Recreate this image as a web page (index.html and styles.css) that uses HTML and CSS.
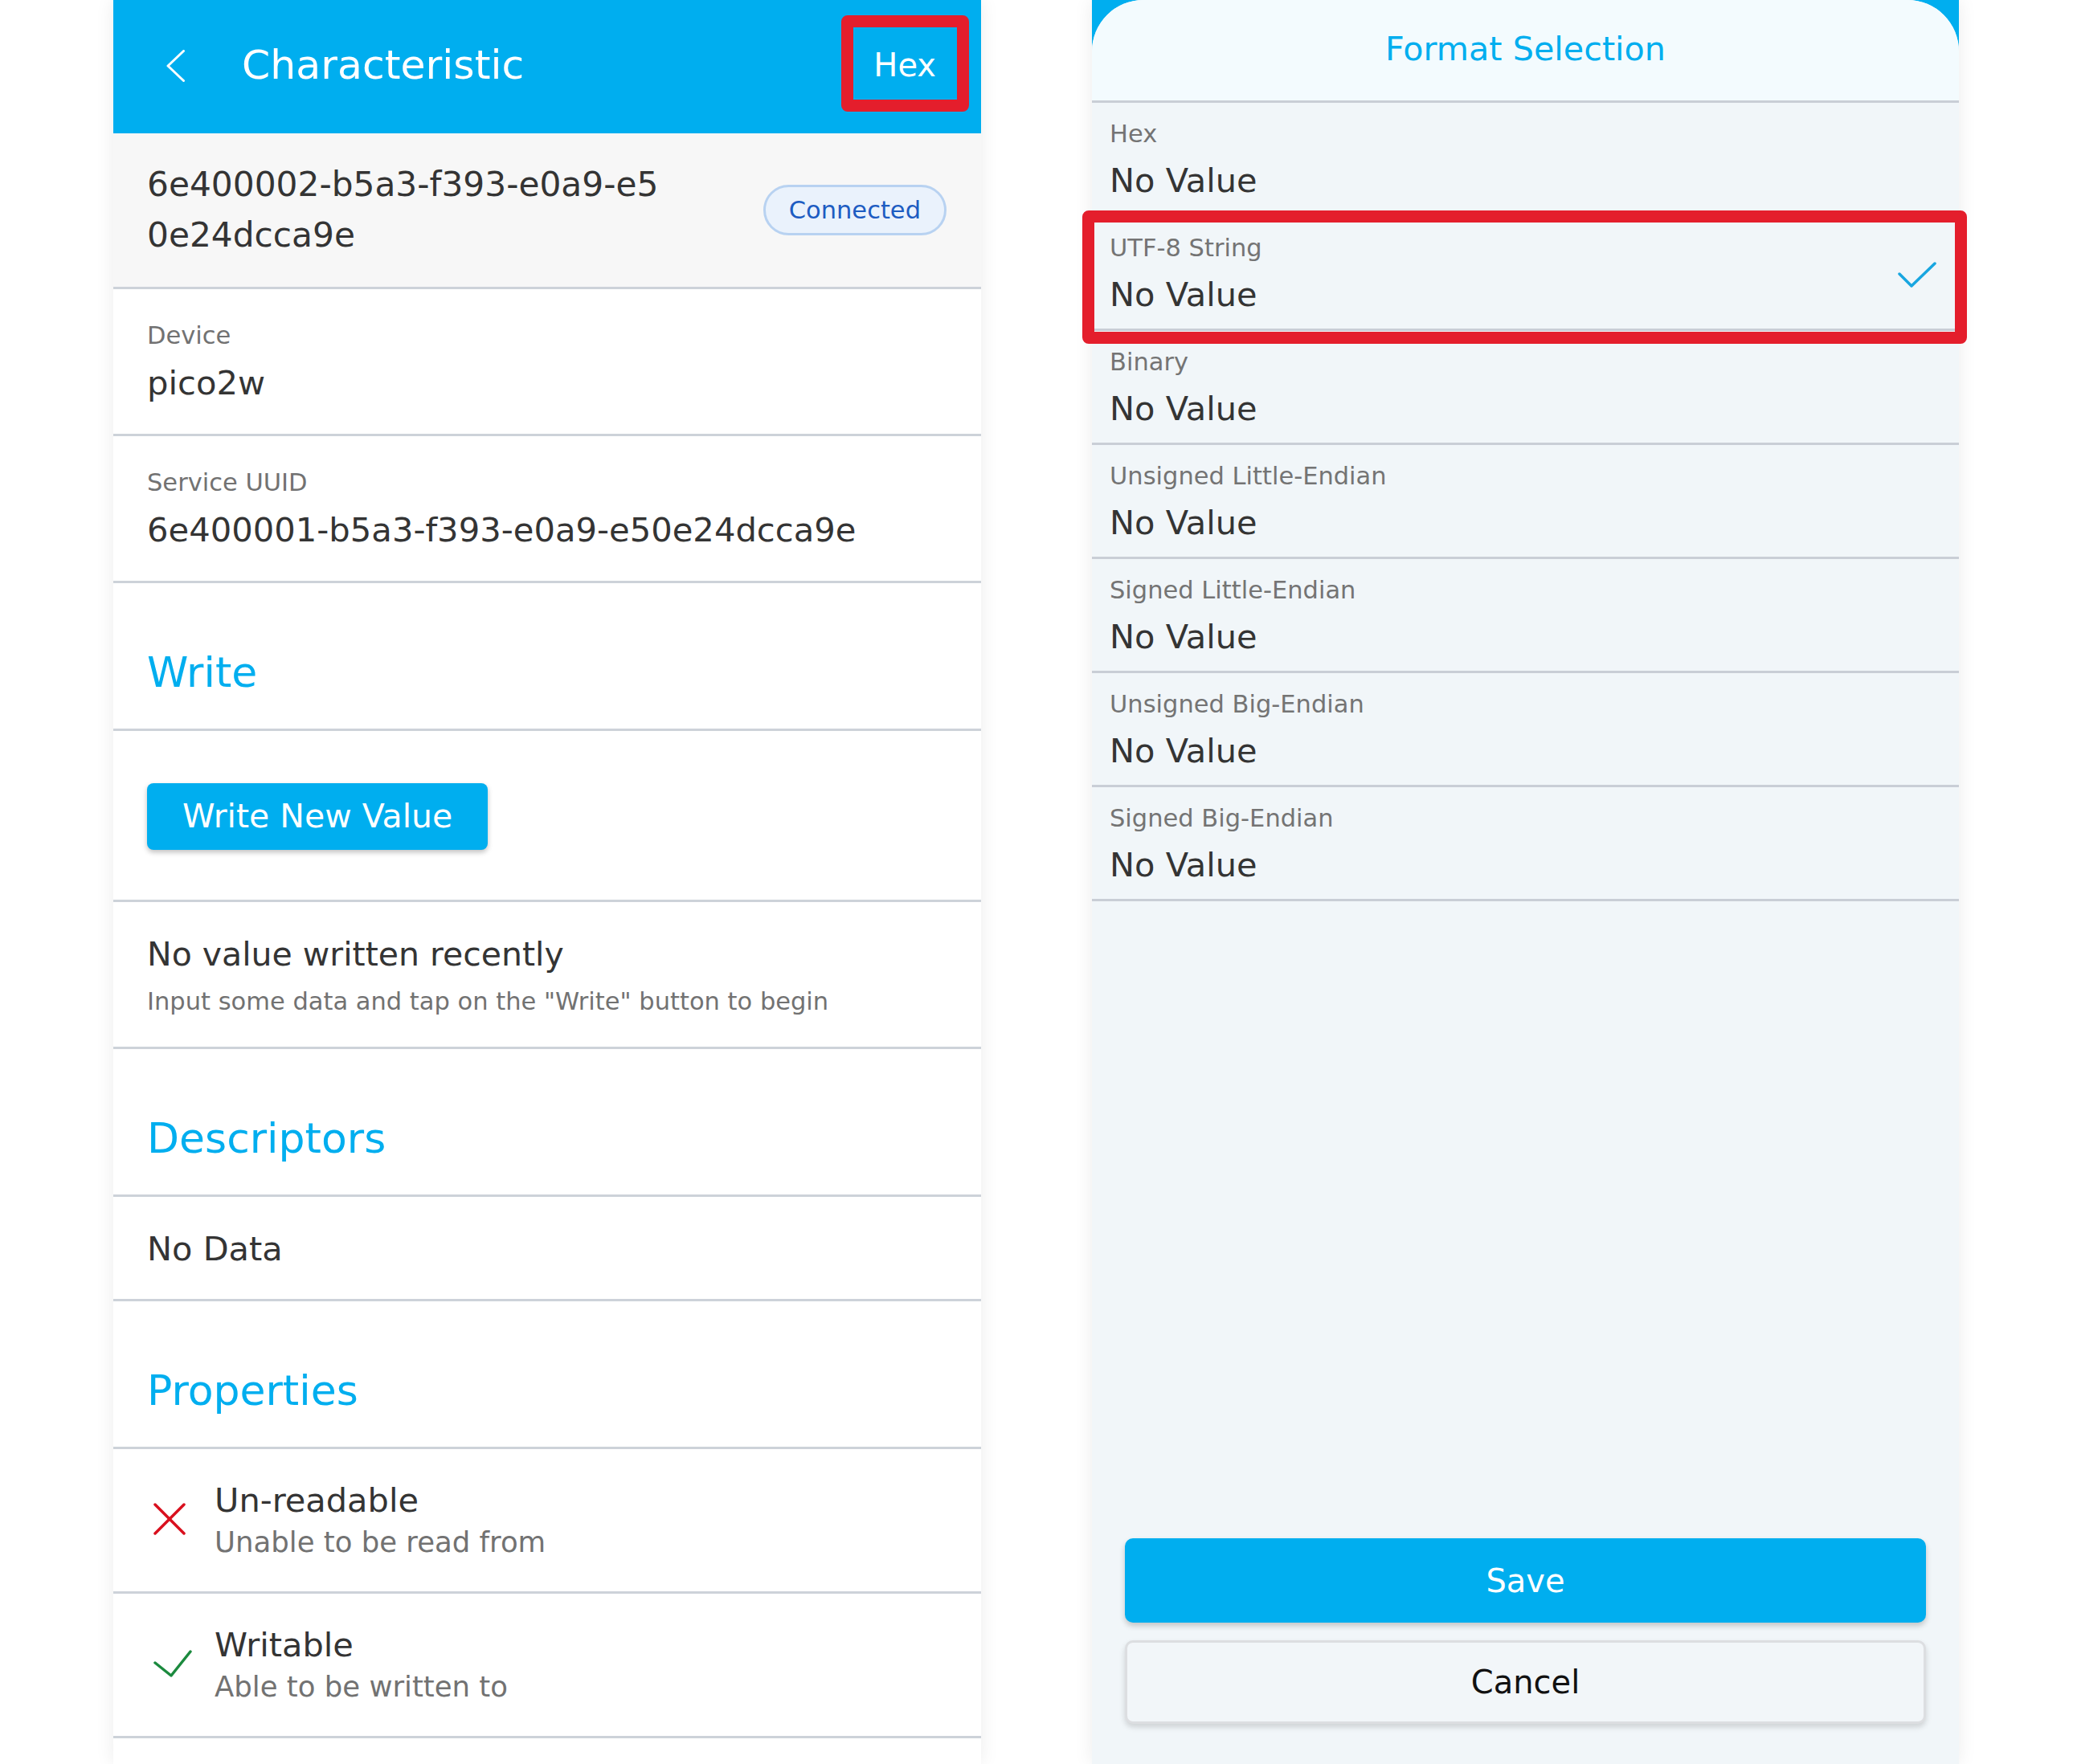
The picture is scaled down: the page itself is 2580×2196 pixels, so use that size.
FILE: index.html
```html
<!DOCTYPE html>
<html lang="en">
<head>
<meta charset="utf-8">
<title>Characteristic / Format Selection</title>
<link rel="stylesheet" href="styles.css">
</head>
<body>
<div class="stage">
  <section class="screen screen-left">
    <header class="appbar">
      <svg class="back-icon" width="24" height="40" viewBox="0 0 24 40" aria-hidden="true">
        <polyline points="21.5,1.5 2,20 21.5,38.5" fill="none" stroke="#fff" stroke-width="3" stroke-linecap="round" stroke-linejoin="round"/>
      </svg>
      <h1 class="appbar-title">Characteristic</h1>
      <span class="appbar-action">Hex</span>
    </header>

    <div class="row row-uuid">
      <div class="uuid">6e400002-b5a3-f393-e0a9-e50e24dcca9e</div>
      <span class="badge">Connected</span>
    </div>

    <div class="row field">
      <div class="field-label">Device</div>
      <div class="field-value">pico2w</div>
    </div>

    <div class="row field">
      <div class="field-label">Service UUID</div>
      <div class="field-value">6e400001-b5a3-f393-e0a9-e50e24dcca9e</div>
    </div>

    <div class="row section-title">Write</div>

    <div class="row row-button">
      <button class="btn-write">Write New Value</button>
    </div>

    <div class="row info">
      <div class="info-title">No value written recently</div>
      <div class="info-sub">Input some data and tap on the "Write" button to begin</div>
    </div>

    <div class="row section-title">Descriptors</div>

    <div class="row plain">No Data</div>

    <div class="row section-title">Properties</div>

    <div class="row prop">
      <span class="prop-icon">
        <svg width="40" height="40" viewBox="0 0 40 40" aria-hidden="true">
          <line x1="2" y1="2" x2="38" y2="38" stroke="#d9101e" stroke-width="3.5" stroke-linecap="round"/>
          <line x1="38" y1="2" x2="2" y2="38" stroke="#d9101e" stroke-width="3.5" stroke-linecap="round"/>
        </svg>
      </span>
      <div class="prop-text">
        <div class="prop-title">Un-readable</div>
        <div class="prop-sub">Unable to be read from</div>
      </div>
    </div>

    <div class="row prop">
      <span class="prop-icon">
        <svg width="48" height="34" viewBox="0 0 48 34" aria-hidden="true">
          <polyline points="2,16 22,32 46,2" fill="none" stroke="#1b8a3e" stroke-width="3.5" stroke-linecap="round" stroke-linejoin="round"/>
        </svg>
      </span>
      <div class="prop-text">
        <div class="prop-title">Writable</div>
        <div class="prop-sub">Able to be written to</div>
      </div>
    </div>

    <div class="row plain"></div>

    <div class="highlight highlight-hex"></div>
  </section>

  <section class="screen screen-right">
    <div class="sheet">
      <div class="sheet-header">Format Selection</div>
      <ul class="format-list">
        <li class="format-row">
          <div class="format-text">
            <div class="format-label">Hex</div>
            <div class="format-value">No Value</div>
          </div>
        </li>
        <li class="format-row">
          <div class="format-text">
            <div class="format-label">UTF-8 String</div>
            <div class="format-value">No Value</div>
          </div>
          <svg class="format-check" width="48" height="34" viewBox="0 0 48 34" aria-hidden="true">
            <polyline points="2,16 17,31 46,3" fill="none" stroke="#18a6e0" stroke-width="3.5" stroke-linecap="round" stroke-linejoin="round"/>
          </svg>
        </li>
        <li class="format-row">
          <div class="format-text">
            <div class="format-label">Binary</div>
            <div class="format-value">No Value</div>
          </div>
        </li>
        <li class="format-row">
          <div class="format-text">
            <div class="format-label">Unsigned Little-Endian</div>
            <div class="format-value">No Value</div>
          </div>
        </li>
        <li class="format-row">
          <div class="format-text">
            <div class="format-label">Signed Little-Endian</div>
            <div class="format-value">No Value</div>
          </div>
        </li>
        <li class="format-row">
          <div class="format-text">
            <div class="format-label">Unsigned Big-Endian</div>
            <div class="format-value">No Value</div>
          </div>
        </li>
        <li class="format-row">
          <div class="format-text">
            <div class="format-label">Signed Big-Endian</div>
            <div class="format-value">No Value</div>
          </div>
        </li>
      </ul>
      <div class="sheet-actions">
        <button class="btn btn-primary">Save</button>
        <button class="btn btn-secondary">Cancel</button>
      </div>
    </div>
    <div class="highlight highlight-utf8"></div>
  </section>
</div>
</body>
</html>
```

FILE: styles.css
```css
* {
  box-sizing: border-box;
}

html, body {
  margin: 0;
  padding: 0;
  background: #ffffff;
}

body {
  width: 2580px;
  height: 2196px;
  overflow: hidden;
  font-family: "DejaVu Sans", "Liberation Sans", sans-serif;
  color: #343434;
}

.stage {
  display: flex;
  gap: 138px;
  padding-left: 141px;
  height: 2196px;
}

.screen {
  position: relative;
  height: 2196px;
  overflow: visible;
  box-shadow: 0 0 22px rgba(0, 0, 0, 0.08);
}

.screen-left {
  width: 1080px;
  background: #ffffff;
}

.screen-right {
  width: 1079px;
  background: linear-gradient(#00aeef 0, #00aeef 166px, #ffffff 166px);
}

/* ---------- App bar ---------- */
.appbar {
  height: 166px;
  background: #00aeef;
  display: flex;
  align-items: center;
  padding: 0 56px 5px 66px;
  color: #ffffff;
}

.back-icon {
  flex: none;
  margin-top: 2px;
}

.appbar-title {
  flex: 1;
  margin: 0 0 0 70px;
  font-size: 50.5px;
  font-weight: normal;
  line-height: 60px;
}

.appbar-action {
  font-size: 40px;
  line-height: 58px;
}

/* ---------- Rows ---------- */
.row {
  border-bottom: 3px solid #cdd2d9;
  padding-left: 42px;
  padding-right: 42px;
}

.row-uuid {
  background: #f7f7f7;
  display: flex;
  align-items: center;
  justify-content: space-between;
  padding-top: 32px;
  padding-bottom: 33px;
  padding-right: 43px;
}

.uuid {
  width: 648px;
  font-size: 42.3px;
  line-height: 63px;
  word-break: break-all;
  color: #343434;
}

.badge {
  display: inline-block;
  height: 63px;
  padding: 0 29px;
  border: 3px solid #b8d2f1;
  border-radius: 32px;
  background: #eaf2fc;
  color: #1d5cc2;
  font-size: 30.5px;
  line-height: 57px;
}

.field {
  padding-top: 36px;
  padding-bottom: 34px;
}

.field-label {
  font-size: 30.5px;
  line-height: 44px;
  margin-bottom: 8px;
  color: #727272;
}

.field-value {
  font-size: 41.7px;
  line-height: 58px;
  color: #343434;
}

.section-title {
  padding-top: 81px;
  padding-bottom: 40px;
  font-size: 52px;
  line-height: 60px;
  color: #00aeef;
}

.row-button {
  padding-top: 65px;
  padding-bottom: 62px;
}

.btn-write {
  display: block;
  height: 83px;
  padding: 0 44px;
  border: none;
  border-radius: 8px;
  background: #00aeef;
  color: #ffffff;
  font-family: inherit;
  font-size: 41px;
  line-height: 83px;
  box-shadow: 0 3px 6px rgba(0, 0, 0, 0.25);
}

.info {
  padding-top: 36px;
  padding-bottom: 34px;
}

.info-title {
  font-size: 41px;
  line-height: 58px;
  margin-bottom: 8px;
  color: #343434;
}

.info-sub {
  font-size: 30.5px;
  line-height: 44px;
  color: #727272;
}

.plain {
  padding-top: 36px;
  padding-bottom: 33px;
  font-size: 41.5px;
  line-height: 58px;
  color: #343434;
}

.prop {
  display: flex;
  align-items: center;
  padding-top: 35px;
  padding-bottom: 38px;
}

.prop-icon {
  flex: none;
  width: 84px;
  padding-left: 8px;
  display: flex;
  align-items: center;
}

.prop-title {
  font-size: 41.5px;
  line-height: 58px;
  color: #343434;
}

.prop-sub {
  font-size: 35.5px;
  line-height: 46px;
  color: #727272;
}

/* ---------- Highlights ---------- */
.highlight {
  position: absolute;
  border: 15px solid #e41e2c;
  border-radius: 8px;
  pointer-events: none;
}

.highlight-hex {
  left: 906px;
  top: 19px;
  width: 159px;
  height: 120px;
}

.highlight-utf8 {
  left: -12px;
  top: 262px;
  width: 1101px;
  height: 166px;
}

/* ---------- Sheet ---------- */
.sheet {
  height: 2196px;
  display: flex;
  flex-direction: column;
  background: #f1f6f9;
  border-radius: 64px 64px 0 0;
  overflow: hidden;
}

.sheet-header {
  background: #f3fbfe;
  border-bottom: 3px solid #c9ced6;
  padding: 32px 0 35px;
  text-align: center;
  font-size: 41.3px;
  line-height: 58px;
  color: #00aeef;
}

.format-list {
  list-style: none;
  margin: 0;
  padding: 0;
}

.format-row {
  display: flex;
  align-items: center;
  padding: 17px 28px 13px 22px;
  border-bottom: 3px solid #c9ced6;
}

.format-text {
  flex: 1;
}

.format-label {
  font-size: 30.5px;
  line-height: 44px;
  margin-bottom: 7px;
  color: #747474;
}

.format-value {
  font-size: 41.5px;
  line-height: 58px;
  color: #343434;
}

.format-check {
  flex: none;
}

.sheet-actions {
  margin-top: auto;
  display: flex;
  flex-direction: column;
  gap: 22px;
  padding: 0 41px 50px;
}

.btn {
  display: block;
  width: 100%;
  font-family: inherit;
  font-size: 40px;
  border-radius: 10px;
}

.btn-primary {
  height: 105px;
  border: none;
  background: #00aeef;
  color: #ffffff;
  box-shadow: 0 4px 7px rgba(0, 0, 0, 0.2);
}

.btn-secondary {
  height: 104px;
  border: 3px solid #dcdee1;
  background: #f2f6f9;
  color: #111111;
  box-shadow: 0 4px 7px rgba(0, 0, 0, 0.15);
}
```
